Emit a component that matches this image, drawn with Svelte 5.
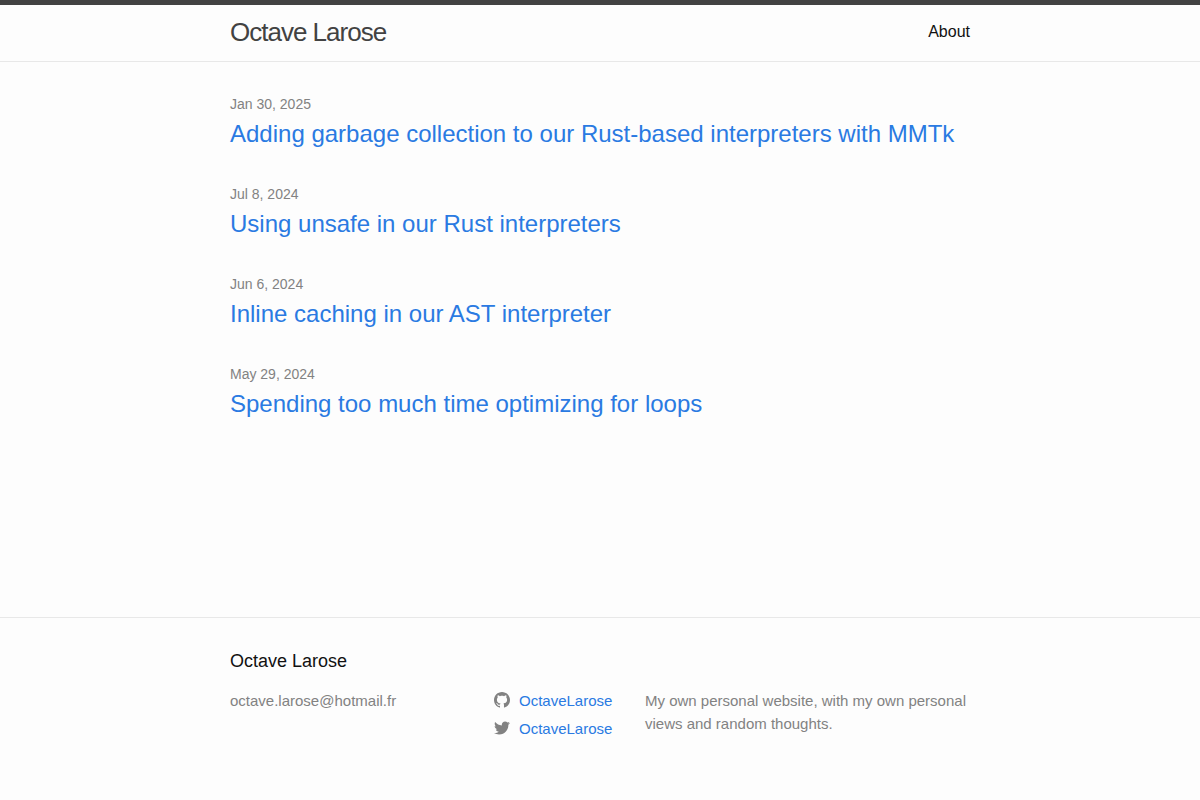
<script lang="ts">
	type Post = {
		date: string
		title: string
		slug: string
	}

	const siteTitle = 'Octave Larose'
	const email = 'octave.larose@hotmail.fr'
	const username = 'OctaveLarose'

	const posts: Post[] = [
		{
			date: 'Jan 30, 2025',
			title: 'Adding garbage collection to our Rust-based interpreters with MMTk',
			slug: 'mmtk',
		},
		{ date: 'Jul 8, 2024', title: 'Using unsafe in our Rust interpreters', slug: 'unsafe' },
		{ date: 'Jun 6, 2024', title: 'Inline caching in our AST interpreter', slug: 'inline-caching' },
		{ date: 'May 29, 2024', title: 'Spending too much time optimizing for loops', slug: 'for-loops' },
	]
</script>

<div class="page">
	<header class="site-header">
		<div class="wrapper">
			<a class="site-title" href="/">{siteTitle}</a>
			<nav>
				<a class="page-link" href="/about">About</a>
			</nav>
		</div>
	</header>

	<main>
		<div class="wrapper">
			<ul class="post-list">
				{#each posts as post}
					<li>
						<span class="post-meta">{post.date}</span>
						<h3>
							<a href="/{post.slug}">{post.title}</a>
						</h3>
					</li>
				{/each}
			</ul>
		</div>
	</main>

	<footer>
		<div class="wrapper">
			<h2>{siteTitle}</h2>
			<div class="columns">
				<a class="email" href="mailto:{email}">{email}</a>

				<ul class="social">
					<li>
						<a href="https://github.com/{username}">
							<svg viewBox="0 0 16 16" aria-hidden="true">
								<path
									d="M8 0C3.58 0 0 3.582 0 8c0 3.535 2.292 6.533 5.47 7.59.4.075.547-.172.547-.385 0-.19-.007-.693-.01-1.36-2.226.483-2.695-1.073-2.695-1.073-.364-.924-.89-1.17-.89-1.17-.725-.496.056-.486.056-.486.803.056 1.225.824 1.225.824.714 1.223 1.873.87 2.33.665.072-.517.278-.87.507-1.07-1.777-.2-3.644-.888-3.644-3.953 0-.873.31-1.587.823-2.147-.083-.202-.358-1.015.077-2.117 0 0 .672-.215 2.2.82.638-.178 1.323-.266 2.003-.27.68.004 1.364.092 2.003.27 1.527-1.035 2.198-.82 2.198-.82.437 1.102.163 1.915.08 2.117.513.56.823 1.274.823 2.147 0 3.073-1.87 3.75-3.653 3.947.287.246.543.735.543 1.48 0 1.07-.01 1.933-.01 2.195 0 .215.144.463.55.385C13.71 14.53 16 11.534 16 8c0-4.418-3.582-8-8-8"
								/>
							</svg>
							<span>{username}</span>
						</a>
					</li>
					<li>
						<a href="https://twitter.com/{username}">
							<svg viewBox="0 0 16 16" aria-hidden="true">
								<path
									d="M15.969 3.058c-.586.26-1.217.436-1.878.515.675-.405 1.194-1.045 1.438-1.809-.632.375-1.332.647-2.076.793-.596-.636-1.446-1.033-2.387-1.033-1.806 0-3.27 1.464-3.27 3.27 0 .256.029.506.085.745C5.163 5.404 2.753 4.102 1.14 2.124c-.281.482-.442 1.044-.442 1.644 0 1.134.577 2.135 1.455 2.722-.536-.016-1.04-.164-1.481-.409v.041c0 1.584 1.127 2.906 2.623 3.206-.275.075-.564.115-.861.115-.211 0-.416-.021-.615-.059.416 1.299 1.624 2.245 3.055 2.271-1.119.877-2.529 1.4-4.061 1.4-.264 0-.524-.015-.78-.046 1.447.928 3.166 1.469 5.013 1.469 6.015 0 9.304-4.983 9.304-9.304 0-.142-.003-.283-.009-.423.638-.461 1.193-1.037 1.628-1.693"
								/>
							</svg>
							<span>{username}</span>
						</a>
					</li>
				</ul>

				<p>My own personal website, with my own personal views and random thoughts.</p>
			</div>
		</div>
	</footer>
</div>

<style>
	:global(body) {
		margin: 0;
		background: #fdfdfd;
	}

	.page {
		display: flex;
		flex-direction: column;
		min-height: 100vh;
		font-family: 'Liberation Sans', Arial, sans-serif;
		font-size: 16px;
		line-height: 24px;
		color: #111;
	}

	a {
		color: #2a7ae2;
		text-decoration: none;

		&:hover {
			text-decoration: underline;
		}
	}

	ul {
		margin: 0;
		padding: 0;
		list-style: none;
	}

	.wrapper {
		max-width: 740px;
		margin: 0 auto;
		padding: 0 30px;
	}

	.site-header {
		border-top: 5px solid #424242;
		border-bottom: 1px solid #e8e8e8;

		.wrapper {
			display: flex;
			justify-content: space-between;
			min-height: 56px;
		}
	}

	.site-title {
		font-size: 26px;
		line-height: 54px;
		letter-spacing: -1px;
		color: #424242;
	}

	.page-link {
		line-height: 54px;
		color: #111;
	}

	main {
		flex: 1;
		padding: 30px 0;
	}

	.post-list li {
		margin-bottom: 30px;
	}

	.post-meta {
		display: block;
		font-size: 14px;
		color: #828282;
	}

	h3 {
		margin: 0;
		font-size: 24px;
		font-weight: 400;
		line-height: 36px;
	}

	footer {
		padding: 30px 0;
		border-top: 1px solid #e8e8e8;

		h2 {
			margin: 0 0 14px;
			font-size: 18px;
			font-weight: 400;
			line-height: 27px;
		}
	}

	.columns {
		display: grid;
		grid-template-columns: 264px 151px 1fr;
		min-height: 81px;
		font-size: 15px;
		line-height: 23px;
		color: #828282;

		p {
			margin: 0;
		}
	}

	.email {
		color: #828282;
	}

	.social {
		display: grid;
		align-content: start;
		gap: 5px;

		a {
			display: flex;
			gap: 9px;
		}

		svg {
			width: 16px;
			height: 16px;
			margin-top: 3px;
			fill: #828282;
		}
	}

	@media (width <= 800px) {
		.columns {
			grid-template-columns: 1fr 1fr;
			gap: 15px;
		}
	}
</style>
